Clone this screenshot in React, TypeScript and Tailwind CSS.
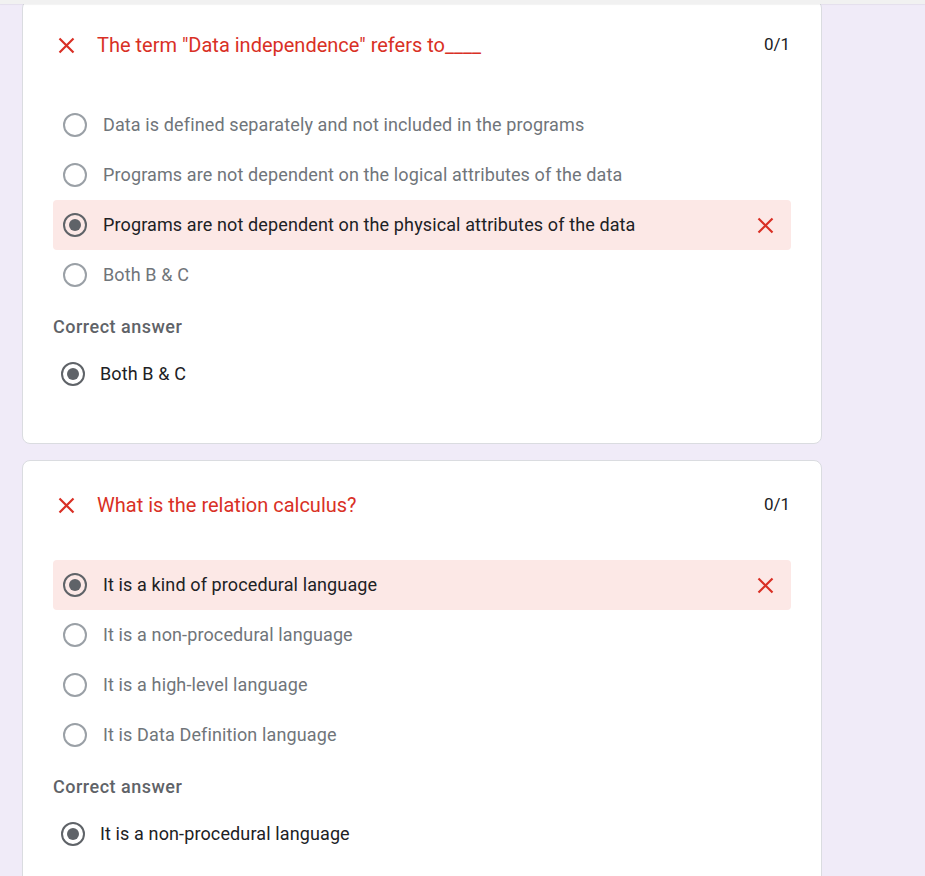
import React from "react";

const font = { fontFamily: "Roboto, 'Liberation Sans', sans-serif" };

function XIcon({ className = "" }: { className?: string }) {
  return (
    <svg width="17" height="17" viewBox="0 0 17 17" className={className}>
      <path d="M1.5 1.5 L15.5 15.5 M15.5 1.5 L1.5 15.5" stroke="#d93025" strokeWidth="2.2" strokeLinecap="butt" fill="none" />
    </svg>
  );
}

function Radio({ checked }: { checked: boolean }) {
  return checked ? (
    <div className="w-[24px] h-[24px] rounded-full border-2 border-[#5f6368] flex items-center justify-center shrink-0">
      <div className="w-[12px] h-[12px] rounded-full bg-[#5f6368]" />
    </div>
  ) : (
    <div className="w-[24px] h-[24px] rounded-full border-2 border-[#9aa0a6] shrink-0" />
  );
}

type Q = {
  title: string;
  options: string[];
  selected: number;
  correct: string;
};

function Card({ q }: { q: Q }) {
  return (
    <div className="bg-white border border-[#dadce0] rounded-[8px] w-[800px] px-[30px] pt-[32px] pb-[45px]">
      <div className="flex items-center h-[24px]">
        <div className="w-[44px] pl-[5px] flex items-center">
          <XIcon />
        </div>
        <div className="text-[20px] text-[#d93025] flex-1">{q.title}</div>
        <div className="text-[17px] text-[#202124] pr-[1px]">0/1</div>
      </div>
      <div className="mt-[43px] flex flex-col">
        {q.options.map((o, i) => {
          const sel = i === q.selected;
          return (
            <div
              key={i}
              className={
                "h-[50px] flex items-center pl-[10px] rounded-[4px] " +
                (sel ? "bg-[#fce8e6]" : "")
              }
            >
              <Radio checked={sel} />
              <div className={"ml-[16px] text-[18px] tracking-[0.12px] leading-[24px] pb-[1px] flex-1 " + (sel ? "text-[#202124]" : "text-[#70757a]")}>{o}</div>
              {sel && (
                <div className="pr-[17px] flex items-center">
                  <XIcon />
                </div>
              )}
            </div>
          );
        })}
      </div>
      <div className="mt-[15px] text-[18px] font-medium text-[#5f6368] tracking-[0.5px] leading-[24px]">Correct answer</div>
      <div className="mt-[11px] flex items-center h-[48px] pl-[8px]">
        <Radio checked={true} />
        <div className="ml-[15px] text-[18px] tracking-[0.12px] leading-[24px] pb-[1px] text-[#202124]">{q.correct}</div>
      </div>
    </div>
  );
}

export default function App() {
  const q1: Q = {
    title: 'The term "Data independence" refers to____',
    options: [
      "Data is defined separately and not included in the programs",
      "Programs are not dependent on the logical attributes of the data",
      "Programs are not dependent on the physical attributes of the data",
      "Both B & C",
    ],
    selected: 2,
    correct: "Both B & C",
  };
  const q2: Q = {
    title: "What is the relation calculus?",
    options: [
      "It is a kind of procedural language",
      "It is a non-procedural language",
      "It is a high-level language",
      "It is Data Definition language",
    ],
    selected: 0,
    correct: "It is a non-procedural language",
  };
  return (
    <div style={font} className="relative w-[925px] h-[876px] overflow-hidden bg-[#f0ebf8]">
      <div className="absolute top-0 left-0 w-full h-[4px] bg-[#f1f1f1] z-10 shadow-[0_1px_1px_rgba(0,0,0,0.05)]" />
      <div className="pl-[22px] flex flex-col gap-[16px]">
        <Card q={q1} />
        <Card q={q2} />
      </div>
    </div>
  );
}
